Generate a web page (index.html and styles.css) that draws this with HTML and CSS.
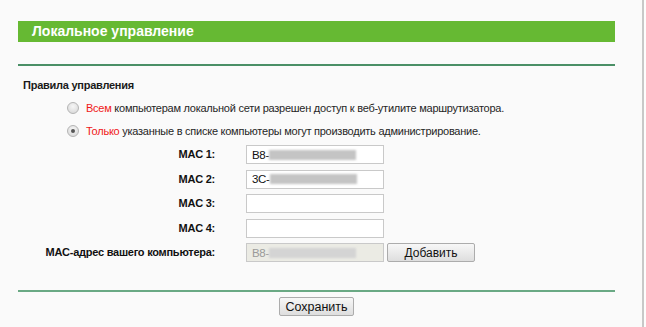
FILE: index.html
```html
<!DOCTYPE html>
<html lang="ru">
<head>
    <meta charset="UTF-8">
    <title>Локальное управление</title>
    <link rel="stylesheet" href="styles.css">
</head>
<body>
    <div class="frame">
        <div class="content">
            <div class="title-bar">Локальное управление</div>
            <div class="rule"></div>

            <div class="section-title">Правила управления</div>
            <div class="options">
                <div class="option">
                    <span class="radio"></span>
                    <span><span class="red">Всем</span> компьютерам локальной сети разрешен доступ к веб-утилите маршрутизатора.</span>
                </div>
                <div class="option">
                    <span class="radio checked"></span>
                    <span><span class="red">Только</span> указанные в списке компьютеры могут производить администрирование.</span>
                </div>
            </div>

            <div class="mac-grid">
                <div class="label">MAC 1:</div>
                <div class="field">B8-<span class="blur"></span></div>
                <div></div>

                <div class="label">MAC 2:</div>
                <div class="field">3C-<span class="blur"></span></div>
                <div></div>

                <div class="label">MAC 3:</div>
                <div class="field"></div>
                <div></div>

                <div class="label">MAC 4:</div>
                <div class="field"></div>
                <div></div>

                <div class="label">MAC-адрес вашего компьютера:</div>
                <div class="field disabled">B8-<span class="blur light"></span></div>
                <div><button class="btn add">Добавить</button></div>
            </div>

            <div class="rule bottom"></div>
            <div class="actions">
                <button class="btn save">Сохранить</button>
            </div>
        </div>
    </div>
    <div class="edge"></div>
</body>
</html>
```

FILE: styles.css
```css
html, body {
    height: 100%;
}

body {
    margin: 0;
    display: flex;
    font-family: "Liberation Sans", Arial, sans-serif;
    font-size: 11px;
    letter-spacing: -0.25px;
    color: #222;
    background: #fafafa;
}

.frame {
    width: 642px;
    flex: none;
}

.edge {
    flex: 1;
    border-left: 2px solid #c8c8c8;
    background: #fdfdfd;
}

.content {
    width: 597px;
    margin-left: 18px;
    padding-top: 21px;
}

.title-bar {
    height: 21px;
    line-height: 21px;
    padding-left: 14px;
    background: #66b933;
    color: #fff;
    font-size: 14px;
    font-weight: bold;
    letter-spacing: 0;
}

.rule {
    margin-top: 22px;
    border-top: 2px solid #4a8f66;
}

.rule.bottom {
    margin-top: 28px;
    border-top-color: #6aa984;
}

.section-title {
    margin-top: 11px;
    margin-left: 5px;
    line-height: 16px;
    font-weight: bold;
    color: #1a1a1a;
}

.options {
    margin-top: 3px;
    margin-left: 49px;
    color: #262626;
}

.option {
    display: flex;
    align-items: center;
    height: 23px;
}

.red {
    color: #f01818;
}

.radio {
    width: 12px;
    height: 12px;
    border-radius: 50%;
    border: 1px solid #b4b4b4;
    background: radial-gradient(circle at 50% 35%, #f6f6f6, #d4d4d4);
    margin-right: 7px;
    box-sizing: border-box;
    position: relative;
}

.radio.checked::after {
    content: "";
    position: absolute;
    left: 3px;
    top: 3px;
    width: 4px;
    height: 4px;
    border-radius: 50%;
    background: #555;
}

.mac-grid {
    display: grid;
    grid-template-columns: 228px 138px auto;
    grid-auto-rows: 19px;
    row-gap: 5.5px;
    margin-top: 3px;
}

.label {
    padding-right: 31px;
    text-align: right;
    white-space: nowrap;
    font-weight: bold;
    line-height: 19px;
    color: #111;
}

.field {
    box-sizing: border-box;
    height: 19px;
    border: 1px solid #c9c9c9;
    background: #fff;
    padding-left: 5px;
    display: flex;
    align-items: center;
    font-size: 11.5px;
    letter-spacing: -0.3px;
    color: #111;
}

.field.disabled {
    background: #ebebe4;
    color: #9a9a9a;
}

.blur {
    display: inline-block;
    width: 87px;
    height: 10px;
    background: #c4c4c4;
    filter: blur(1px);
}

.blur.light {
    background: #d4d4d4;
}

.btn {
    box-sizing: border-box;
    height: 19px;
    padding: 0;
    border: 1px solid #acacac;
    border-radius: 2px;
    background: linear-gradient(#f7f7f7, #dedede);
    font-family: "Liberation Sans", Arial, sans-serif;
    letter-spacing: 0;
    color: #111;
}

.add {
    width: 88px;
    margin-left: 3px;
    font-size: 12px;
}

.actions {
    display: flex;
    justify-content: center;
    margin-top: 5px;
}

.save {
    width: 75px;
    font-size: 12.5px;
}
```
